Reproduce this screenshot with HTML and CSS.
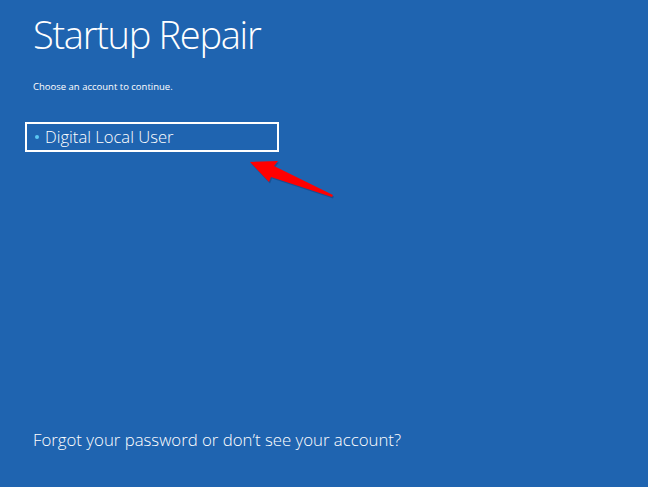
FILE: index.html
```html
<!DOCTYPE html>
<html lang="en">
<head>
  <meta charset="UTF-8" />
  <meta name="viewport" content="width=device-width, initial-scale=1.0" />
  <title>Startup Repair</title>
  <link rel="stylesheet" href="styles.css">
</head>
<body>
  <div class="screen">
    <h1 class="title">Startup Repair</h1>
    <p class="hint">Choose an account to continue.</p>
    <ul class="accounts">
      <li class="account selected">
        <span class="dot"></span>
        <span class="name">Digital Local User</span>
      </li>
    </ul>
    <a class="forgot" href="#">Forgot your password or don’t see your account?</a>
    <svg class="pointer" width="95" height="45" viewBox="0 0 95 45">
      <polygon points="5,7 33,6 29,11 88,40 87,42 26,22 24,27" fill="#0b2f60" opacity="0.35" transform="translate(1,1.5)" />
      <polygon points="5,7 33,6 29,11 88,40 87,42 26,22 24,27" fill="#ff0000" />
    </svg>
  </div>
</body>
</html>
```

FILE: styles.css
```css
:root {
  --bg-color: #1f64b0;
  --text-color: #ffffff;
  --dot-color: #5cc8f2;
}
body {
  margin: 0;
  background: var(--bg-color);
  color: var(--text-color);
  font-family: "Open Sans", "Liberation Sans", sans-serif;
}
.screen {
  position: relative;
  display: flex;
  flex-direction: column;
  height: 487px;
  padding-left: 33px;
  box-sizing: border-box;
}
.title {
  margin: 10px 0 0 0;
  font-size: 38px;
  font-weight: 300;
  line-height: 48px;
  letter-spacing: -1.3px;
}
.hint {
  margin: 23px 0 0 0;
  font-size: 9.5px;
  line-height: 12px;
}
.accounts {
  list-style: none;
  margin: 29px 0 0 -8px;
  padding: 0;
}
.account {
  display: flex;
  align-items: center;
  width: 242px;
  height: 26px;
  border: 2px solid #fff;
  padding-left: 8px;
}
.dot {
  width: 4px;
  height: 4px;
  border-radius: 50%;
  background: var(--dot-color);
  margin-right: 6px;
}
.name {
  font-size: 16.6px;
  font-weight: 300;
  line-height: 20px;
}
.forgot {
  margin-top: auto;
  margin-bottom: 36px;
  color: var(--text-color);
  text-decoration: none;
  font-size: 16.8px;
  font-weight: 300;
  line-height: 22px;
}
.pointer {
  position: absolute;
  left: 245px;
  top: 155px;
}
```
